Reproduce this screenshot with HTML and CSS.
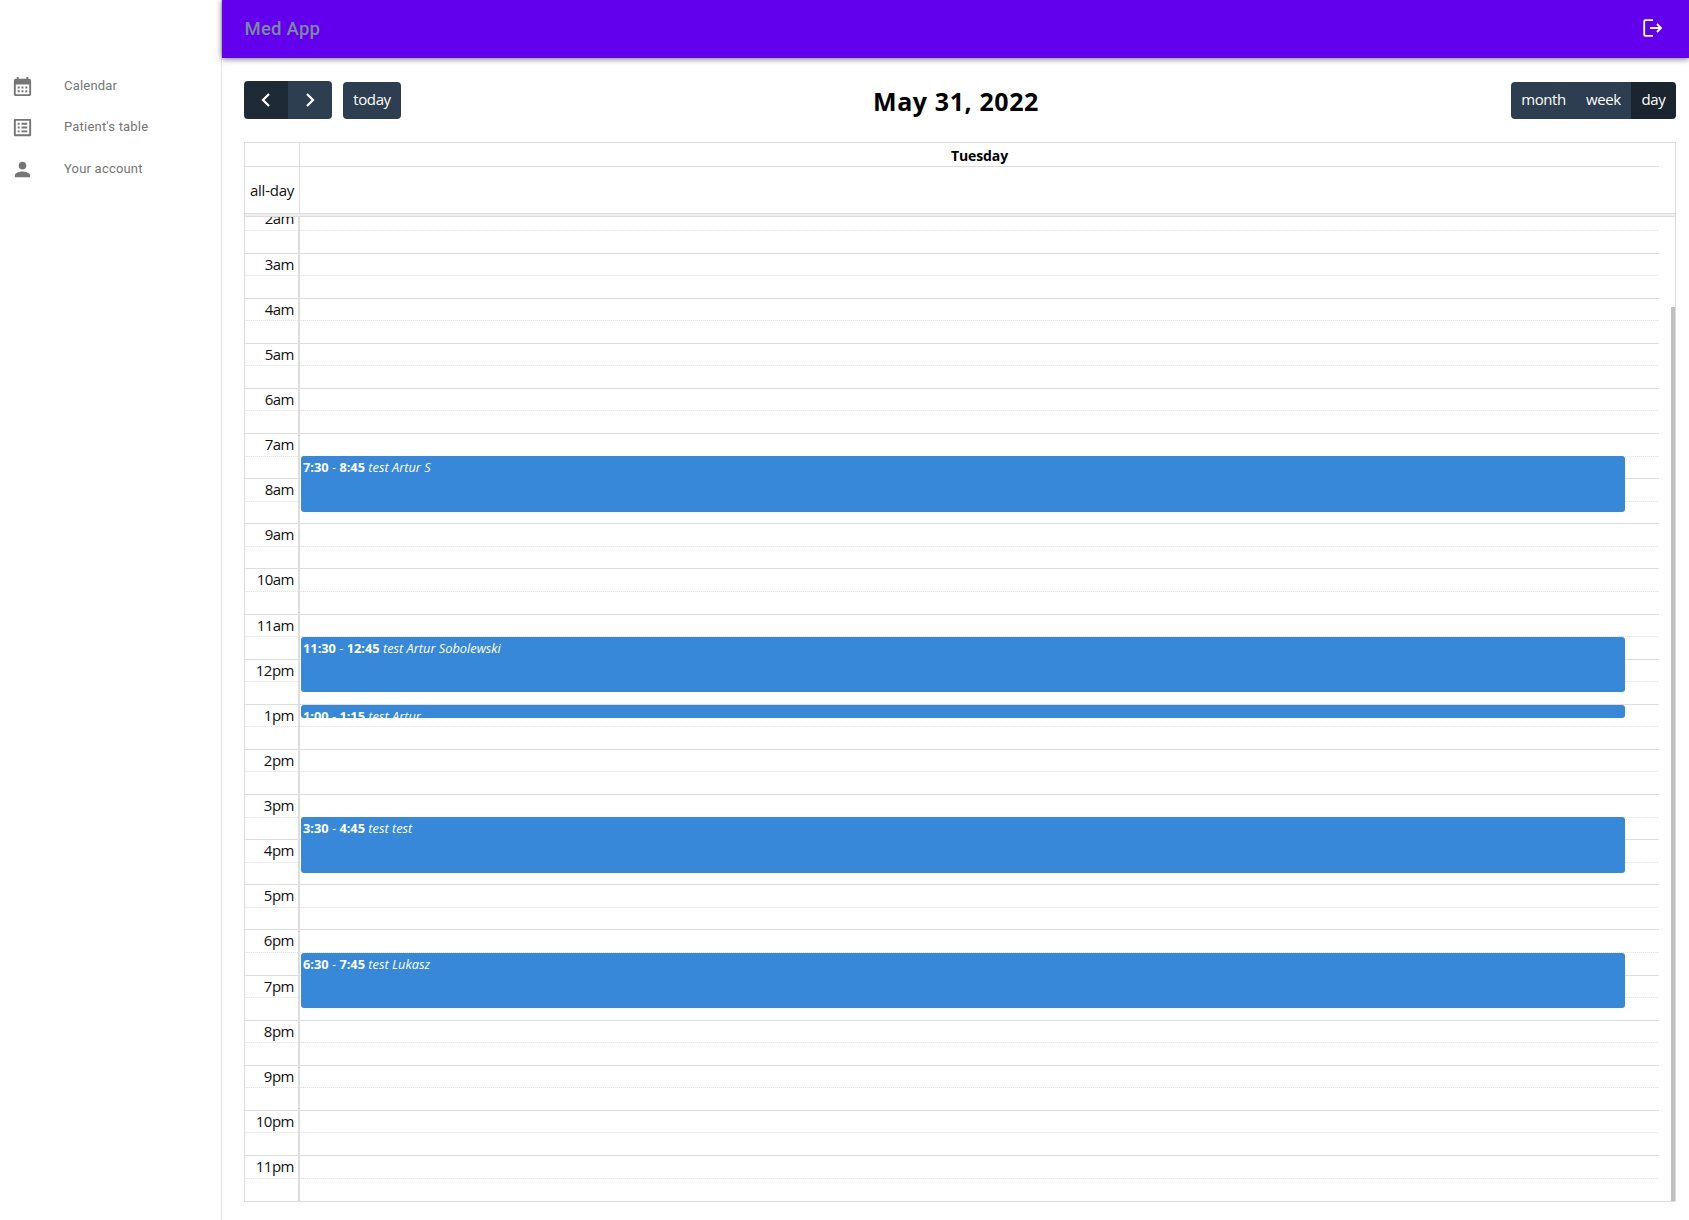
FILE: index.html
```html
<!DOCTYPE html>
<html lang="en">
<head>
<meta charset="utf-8">
<title>Med App</title>
<link rel="stylesheet" href="styles.css">
</head>
<body>
<div class="app">
  <nav class="sidebar">
    <a class="nav-item"><svg class="nav-icon" viewBox="0 0 24 24"><path d="M19 4h-1V2h-2v2H8V2H6v2H5c-1.11 0-1.99.9-1.99 2L3 20c0 1.1.89 2 2 2h14c1.1 0 2-.9 2-2V6c0-1.1-.9-2-2-2zm0 16H5V10h14v10zM9 14H7v-2h2v2zm4 0h-2v-2h2v2zm4 0h-2v-2h2v2zm-8 4H7v-2h2v2zm4 0h-2v-2h2v2zm4 0h-2v-2h2v2z"/></svg><span>Calendar</span></a>
    <a class="nav-item"><svg class="nav-icon list-icon" viewBox="0 0 24 24"><path d="M19 5v14H5V5h14m1.1-2H3.9c-.5 0-.9.4-.9.9v16.2c0 .4.4.9.9.9h16.2c.4 0 .9-.5.9-.9V3.900c0-.5-.5-.9-.9-.9zM11 7h6v2h-6V7zm0 4h6v2h-6v-2zm0 4h6v2h-6zM7 7h2v2H7zm0 4h2v2H7zm0 4h2v2H7z"/></svg><span>Patient's table</span></a>
    <a class="nav-item"><svg class="nav-icon" viewBox="0 0 24 24"><path d="M12 12c2.210 0 4-1.790 4-4s-1.790-4-4-4-4 1.790-4 4 1.790 4 4 4zm0 2c-2.670 0-8 1.340-8 4v2h16v-2c0-2.660-5.330-4-8-4z"/></svg><span>Your account</span></a>
  </nav>
  <div class="main">
    <header class="topbar">
      <span class="brand">Med App</span>
      <svg class="logout" viewBox="0 0 20 18"><path d="M10 1.200H2.500Q1.200 1.200 1.200 2.500v13q0 1.300 1.300 1.300H10M7 9h11M14 5l4 4-4 4"/></svg>
    </header>
    <main class="content">
      <div class="toolbar">
        <div class="left-tools">
          <div class="arrows">
            <button class="arrow pressed"><svg viewBox="0 0 10 14"><path d="M8 1L2 7l6 6"/></svg></button><button class="arrow"><svg viewBox="0 0 10 14"><path d="M2 1l6 6-6 6"/></svg></button>
          </div>
          <button class="btn today">today</button>
        </div>
        <h2 class="title">May 31, 2022</h2>
        <div class="views"><button class="btn month">month</button><button class="btn week">week</button><button class="btn day">day</button></div>
      </div>
      <section class="calendar">
        <div class="head"><div class="axis"></div><div class="day-name">Tuesday</div></div>
        <div class="allday"><div class="axis">all-day</div><div></div></div>
        <div class="divider"></div>
        <div class="body">
          <div class="hours">
            <div class="hour"><span>2am</span></div><div class="hour"><span>3am</span></div><div class="hour"><span>4am</span></div><div class="hour"><span>5am</span></div><div class="hour"><span>6am</span></div><div class="hour"><span>7am</span></div><div class="hour"><span>8am</span></div><div class="hour"><span>9am</span></div><div class="hour"><span>10am</span></div><div class="hour"><span>11am</span></div><div class="hour"><span>12pm</span></div><div class="hour"><span>1pm</span></div><div class="hour"><span>2pm</span></div><div class="hour"><span>3pm</span></div><div class="hour"><span>4pm</span></div><div class="hour"><span>5pm</span></div><div class="hour"><span>6pm</span></div><div class="hour"><span>7pm</span></div><div class="hour"><span>8pm</span></div><div class="hour"><span>9pm</span></div><div class="hour"><span>10pm</span></div><div class="hour"><span>11pm</span></div>
          </div>
          <div class="lane">
            <article class="event" style="top:239px;height:56px"><b>7:30</b> - <b>8:45</b> <i>test Artur S</i></article>
            <article class="event" style="top:420px;height:55px"><b>11:30</b> - <b>12:45</b> <i>test Artur Sobolewski</i></article>
            <article class="event" style="top:487.500px;height:13.500px"><b>1:00</b> - <b>1:15</b> <i>test Artur</i></article>
            <article class="event" style="top:600px;height:56px"><b>3:30</b> - <b>4:45</b> <i>test test</i></article>
            <article class="event" style="top:735.500px;height:55.500px"><b>6:30</b> - <b>7:45</b> <i>test Lukasz</i></article>
          </div>
          <div class="scrollbar"></div>
        </div>
      </section>
    </main>
  </div>
</div>
</body>
</html>
```
FILE: styles.css
```css
* { box-sizing: border-box; }
body { margin: 0; background: #fff; color: #111; font-family: "Open Sans", "Noto Sans", sans-serif; font-size: 15px; }
button { border: 0; padding: 0; font: inherit; color: #fff; background: #2c3e50; }
.app { display: flex; height: 1220px; overflow: hidden; }

.sidebar { width: 222px; border-right: 1px solid #e4e4e4; padding-top: 65px; }
.nav-item { display: flex; align-items: center; height: 41.5px; padding-left: 11px; color: #757575; font: 400 13px/20px Roboto, sans-serif; letter-spacing: .2px; }
.nav-icon { width: 23px; height: 23px; fill: #757575; margin: 2px 30px 0 0; }
.list-icon { margin-top: 1px; }

.main { flex: 1; display: flex; flex-direction: column; }
.topbar { height: 58px; background: #6200ee; display: flex; align-items: center; justify-content: space-between; padding: 0 26px 2px 22.500px; box-shadow: 0 1px 6px rgba(0,0,0,.55); }
.brand { font: 500 18.500px/24px Roboto, sans-serif; color: #7b8a9d; letter-spacing: .25px; padding-top: 2px; }
.logout { width: 20px; height: 18px; fill: none; stroke: #fff; stroke-width: 1.800; }

.content { flex: 1; display: flex; flex-direction: column; padding: 23px 13px 18px 22px; }
.toolbar { display: flex; justify-content: space-between; align-items: flex-start; height: 38px; margin-bottom: 23px; }
.left-tools { display: flex; align-items: center; gap: 11px; }
.arrows { display: flex; border-radius: 4px; overflow: hidden; }
.arrow { width: 44px; height: 38px; display: flex; align-items: center; justify-content: center; }
.arrow.pressed { background: #1e2b37; }
.arrow svg { width: 10px; height: 14px; fill: none; stroke: #fff; stroke-width: 2.200; }
.btn { height: 37px; font-size: 15px; line-height: 35px; padding-bottom: 2px; letter-spacing: -.4px; }
.today { width: 58px; border-radius: 4px; }
.title { margin: 3px 0 0; font-size: 25px; line-height: 34px; font-weight: 700; letter-spacing: .6px; color: #000; }
.views { display: flex; margin-top: 1px; }
.month { width: 65px; border-radius: 4px 0 0 4px; letter-spacing: -.4px; }
.week { width: 55px; }
.day { width: 45px; background: #1a252f; border-radius: 0 4px 4px 0; }

.calendar { flex: 1; display: flex; flex-direction: column; border: 1px solid #ddd; }
.head, .allday { display: grid; grid-template-columns: 55px 1fr; margin-right: 16px; }
.head { height: 24px; border-bottom: 1px solid #ddd; }
.axis { border-right: 1px solid #ddd; }
.day-name { text-align: center; font-weight: 700; font-size: 14px; line-height: 25px; letter-spacing: -.1px; color: #000; }
.allday { height: 46px; }
.allday .axis { text-align: right; padding-right: 5px; line-height: 47px; letter-spacing: -.25px; }
.divider { height: 4px; background: #eee; border: solid #ddd; border-width: 1px 0; }
.body { flex: 1; height: 0; position: relative; overflow: hidden; }
.hours { margin: -9.600px 16px 0 0; }
.hour { height: 45.130px; border-top: 1px solid #ddd; padding-right: calc(100% - 49px); text-align: right; font-size: 15px; line-height: 21.500px; letter-spacing: -.5px; background: repeating-linear-gradient(90deg, #e3e3e3 0 1px, #f8f8f8 1px 2px) 0 21.500px / 100% 1px no-repeat; }
.lane { position: absolute; top: 0; bottom: 0; left: 53px; right: 50px; border-left: 2px solid #ddd; }
.event { position: absolute; left: 1px; right: 0; padding: 2px 0 0 2px; border-radius: 3px; background: #3788d8; color: #fff; overflow: hidden; white-space: nowrap; font-size: 12.800px; line-height: 18px; }
.scrollbar { position: absolute; right: 0; top: 90px; bottom: 0; width: 4px; background: #c1c1c1; }
```
